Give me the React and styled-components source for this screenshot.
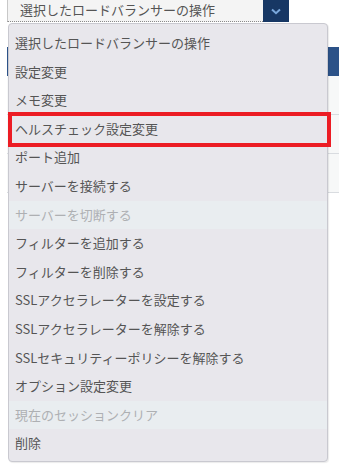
import React from 'react'
import styled, { createGlobalStyle } from 'styled-components'

const GlobalStyle = createGlobalStyle`
  body {
    margin: 0;
    background: #ffffff;
    font-family: "Noto Sans CJK JP", "Noto Sans", sans-serif;
  }
`

const Page = styled.div`
  position: relative;
  width: 339px;
  height: 470px;
  overflow: hidden;
  padding-left: 7px;
  box-sizing: border-box;
`

const SelectRow = styled.div`
  display: flex;
  height: 22px;
`

const SelectBox = styled.div`
  width: 256px;
  box-sizing: border-box;
  background: #f4f4f4;
  border-left: 1px solid #c8c8c8;
  border-bottom: 1px dotted #8a8a8a;
  color: #555;
  font-size: 13px;
  line-height: 20px;
  padding-left: 12px;
`

const ArrowButton = styled.div`
  width: 26px;
  background: #173764;
  display: flex;
  align-items: center;
  justify-content: center;
`

const Table = styled.div`
  margin-top: 25px;
  display: flex;
  flex-direction: column;
`

const HeaderRow = styled.div`
  height: 29px;
  background: #2c5288;
`

const BodyRow = styled.div`
  height: 39px;
  background: #f7f8f8;
  border-bottom: 1px solid #d9dce0;
  box-sizing: border-box;
`

const Menu = styled.ul`
  position: absolute;
  top: 23px;
  left: 8px;
  width: 320px;
  height: 439px;
  box-sizing: border-box;
  margin: 0;
  padding: 5px 0 0;
  list-style: none;
  background: #e8e7ec;
  border: 1px solid #c9c9d0;
  border-radius: 4px;
  box-shadow: 1px 1px 1px rgba(0, 0, 0, 0.08);
`

const Item = styled.li`
  position: relative;
  height: 28.6px;
  line-height: 28.6px;
  padding-left: 6px;
  font-size: 13px;
  color: ${p => (p.disabled ? '#aeb0b3' : '#555555')};
  background: ${p => (p.disabled ? '#e9edf0' : 'transparent')};
  white-space: nowrap;
`

const Highlight = styled.div`
  position: absolute;
  left: -1px;
  right: -4px;
  top: -3px;
  bottom: -4px;
  border: 4.5px solid #ec1c24;
  pointer-events: none;
`

const items = [
  { label: '選択したロードバランサーの操作' },
  { label: '設定変更' },
  { label: 'メモ変更' },
  { label: 'ヘルスチェック設定変更', marked: true },
  { label: 'ポート追加' },
  { label: 'サーバーを接続する' },
  { label: 'サーバーを切断する', disabled: true },
  { label: 'フィルターを追加する' },
  { label: 'フィルターを削除する' },
  { label: 'SSLアクセラレーターを設定する' },
  { label: 'SSLアクセラレーターを解除する' },
  { label: 'SSLセキュリティーポリシーを解除する' },
  { label: 'オプション設定変更' },
  { label: '現在のセッションクリア', disabled: true },
  { label: '削除' },
]

export default function App() {
  return (
    <Page>
      <GlobalStyle />
      <SelectRow>
        <SelectBox>選択したロードバランサーの操作</SelectBox>
        <ArrowButton>
          <svg width="10" height="7" viewBox="0 0 10 7">
            <path d="M1 1.5 L5 5.2 L9 1.5" fill="none" stroke="#7aa8dc" strokeWidth="2" />
          </svg>
        </ArrowButton>
      </SelectRow>
      <Table>
        <HeaderRow />
        <BodyRow />
        <BodyRow />
        <BodyRow />
      </Table>
      <Menu>
        {items.map(it => (
          <Item key={it.label} disabled={it.disabled}>
            {it.label}
            {it.marked && <Highlight />}
          </Item>
        ))}
      </Menu>
    </Page>
  )
}
